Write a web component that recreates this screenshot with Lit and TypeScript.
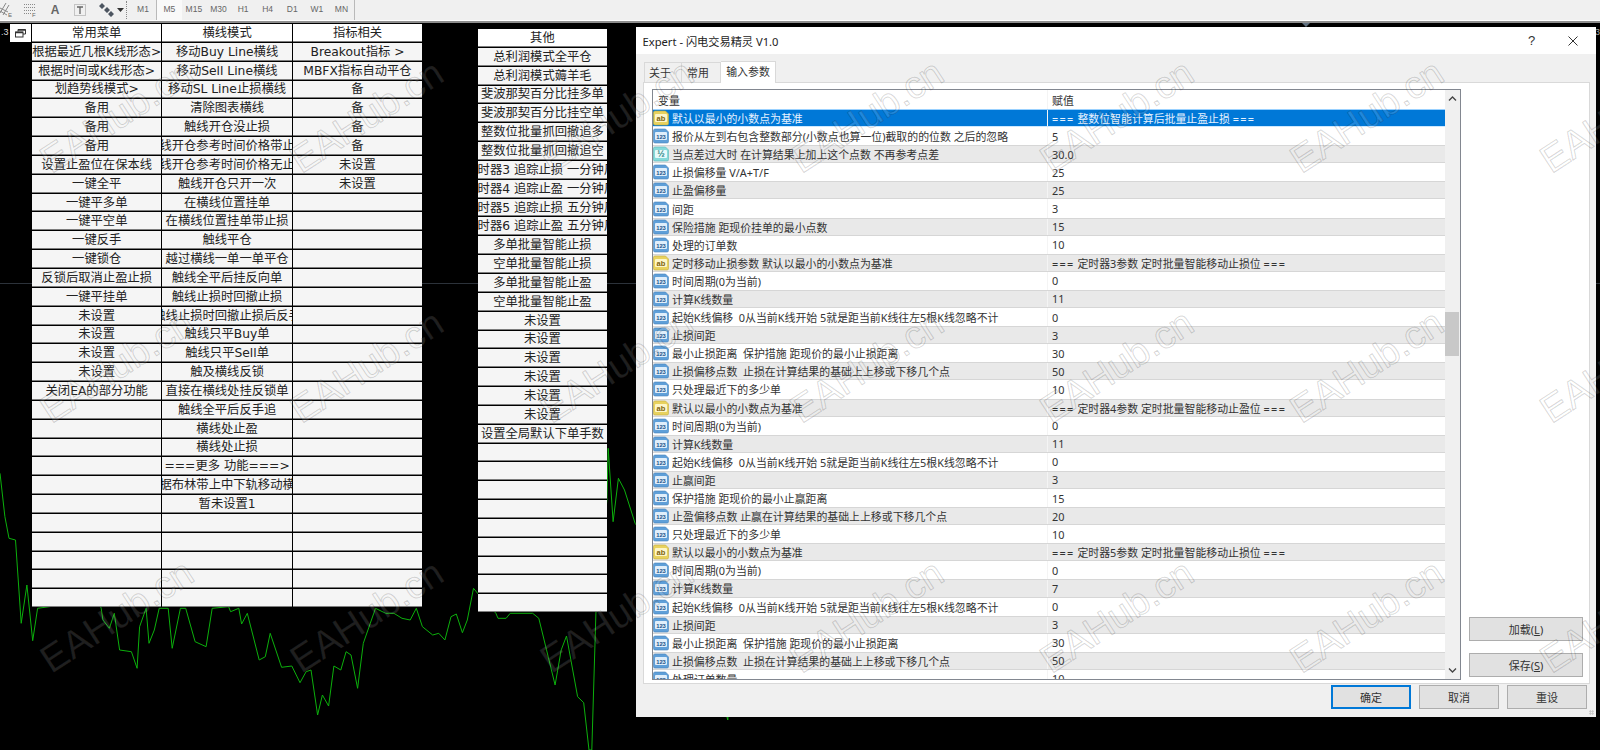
import { LitElement, html, css, svg } from "lit";
import { customElement } from "lit/decorators.js";

const pad = (a: string[], n = 31) => [...a, ...Array(Math.max(0, n - a.length)).fill("")];

const COL1 = pad(["常用菜单","根据最近几根K线形态>","根据时间或K线形态>","划趋势线模式>","备用","备用","备用","设置止盈位在保本线","一键全平","一键平多单","一键平空单","一键反手","一键锁仓","反锁后取消止盈止损","一键平挂单","未设置","未设置","未设置","未设置","关闭EA的部分功能"]);
const COL2 = pad(["横线模式","移动Buy Line横线","移动Sell Line横线","移动SL Line止损横线","清除图表横线","触线开仓没止损","触线开仓参考时间价格带止损","触线开仓参考时间价格无止损","触线开仓只开一次","在横线位置挂单","在横线位置挂单带止损","触线平仓","越过横线一单一单平仓","触线全平后挂反向单","触线止损时回撤止损","触线止损时回撤止损后反手","触线只平Buy单","触线只平Sell单","触及横线反锁","直接在横线处挂反锁单","触线全平后反手追","横线处止盈","横线处止损","===更多 功能===>","根据布林带上中下轨移动横线","暂未设置1"]);
const COL3 = pad(["指标相关","Breakout指标 >","MBFX指标自动平仓","备","备","备","备","未设置","未设置"]);
const COL4 = pad(["其他","总利润模式全平仓","总利润模式薅羊毛","斐波那契百分比挂多单","斐波那契百分比挂空单","整数位批量抓回撤追多","整数位批量抓回撤追空","定时器3 追踪止损 一分钟周期","定时器4 追踪止盈 一分钟周期","定时器5 追踪止损 五分钟周期","定时器6 追踪止盈 五分钟周期","多单批量智能止损","空单批量智能止损","多单批量智能止盈","空单批量智能止盈","未设置","未设置","未设置","未设置","未设置","未设置","设置全局默认下单手数"]);

type P = [string, string, string];
const offs = "起始K线偏移  0从当前K线开始 5就是距当前K线往左5根K线忽略不计";
const PARAMS: P[] = [
  ["ab","默认以最小的小数点为基准","=== 整数位智能计算后批量止盈止损 ==="],
  ["n","报价从左到右包含整数部分(小数点也算一位)截取的的位数 之后的忽略","5"],
  ["f","当点差过大时 在计算结果上加上这个点数 不再参考点差","30.0"],
  ["n","止损偏移量 V/A+T/F","25"],
  ["n","止盈偏移量","25"],
  ["n","间距","3"],
  ["n","保险措施 距现价挂单的最小点数","15"],
  ["n","处理的订单数","10"],
  ["ab","定时移动止损参数 默认以最小的小数点为基准","=== 定时器3参数 定时批量智能移动止损位 ==="],
  ["n","时间周期(0为当前)","0"],
  ["n","计算K线数量","11"],
  ["n",offs,"0"],
  ["n","止损间距","3"],
  ["n","最小止损距离  保护措施 距现价的最小止损距离","30"],
  ["n","止损偏移点数  止损在计算结果的基础上上移或下移几个点","50"],
  ["n","只处理最近下的多少单","10"],
  ["ab","默认以最小的小数点为基准","=== 定时器4参数 定时批量智能移动止盈位 ==="],
  ["n","时间周期(0为当前)","0"],
  ["n","计算K线数量","11"],
  ["n",offs,"0"],
  ["n","止赢间距","3"],
  ["n","保护措施 距现价的最小止赢距离","15"],
  ["n","止盈偏移点数 止赢在计算结果的基础上上移或下移几个点","20"],
  ["n","只处理最近下的多少单","10"],
  ["ab","默认以最小的小数点为基准","=== 定时器5参数 定时批量智能移动止损位 ==="],
  ["n","时间周期(0为当前)","0"],
  ["n","计算K线数量","7"],
  ["n",offs,"0"],
  ["n","止损间距","3"],
  ["n","最小止损距离  保护措施 距现价的最小止损距离","30"],
  ["n","止损偏移点数  止损在计算结果的基础上上移或下移几个点","50"],
  ["n","处理订单数量","10"],
];

// traced in zoomed coordinates: x / 2.45, 400 + y / 3
const TRACE = [0,220,12,350,22,415,38,420,52,670,66,555,80,722,92,625,240,600,248,625,252,660,268,685,280,640,293,750,322,755,336,805,342,680,358,625,365,730,378,690,390,625,412,625,422,745,442,625,455,625,478,725,505,740,520,625,560,620,565,635,585,625,592,672,606,640,635,780,650,770,662,700,690,802,715,798,735,848,750,815,762,810,778,945,790,885,805,918,818,798,835,810,848,755,860,765,876,865,890,730,920,625,945,640,965,640,985,655,1005,660,1020,625,1035,680,1060,705,1075,700,1090,720,1105,650,1118,642,1133,698,1145,660,1160,565,1170,580,1215,640,1220,655,1240,655,1250,640,1305,640,1320,655,1360,855,1375,750,1388,708,1415,890,1430,908,1443,1050,1450,1050,1460,640,1487,300,1490,145,1502,365,1515,235,1530,270,1556,370,1700,600,1783,960,1800,600];
const CHART_TOP = 23;
const LINE = TRACE.reduce((acc: string[], v, i) => {
  if (i % 2 === 0) acc.push(`${(v / 2.45).toFixed(1)},${(400 + TRACE[i + 1] / 3 - CHART_TOP).toFixed(1)}`);
  return acc;
}, []).join(" ");

const TFS = ["M5","M15","M30","H1","H4","D1","W1","MN"];

const marks: [number, number][] = [];
for (const y of [172, 422, 672]) for (let x = 50; x <= 1550; x += 250) marks.push([x, y]);

const icon = (k: string) => {
  const c = k === "ab"
    ? { f: "#e8d25e", s: "#c4ac3c", i: "#fdf6c8", t: "#7c620c", l: "ab", z: 7.500 }
    : k === "f"
    ? { f: "#86dada", s: "#58b8b8", i: "#e6fafa", t: "#268484", l: "½", z: 9 }
    : { f: "#5f9fd8", s: "#4684be", i: "#e0eefa", t: "#174f88", l: "123", z: 5.800 };
  return html`<svg class="ico" width="16" height="16" viewBox="0 0 16 16">
    <path d="M.5 2.500Q.5 1 2 1H12.500L15.500 4V13.500Q15.500 15 14 15H2Q.5 15 .5 13.500Z" fill=${c.f} stroke=${c.s} stroke-width=".6"/>
    <rect x="2" y="4" width="12" height="8" rx="1" fill=${c.i}/>
    <text x="8" y="10.500" text-anchor="middle" font-size=${c.z} font-weight="700" font-family="Liberation Sans, sans-serif" fill=${c.t}>${c.l}</text>
  </svg>`;
};

const valueText = (t: string) =>
  t.split(/(===)/).map((s) => (s === "===" ? html`<span class="eq">${s}</span>` : s));

@customElement("app-panel-table")
class PanelTable extends LitElement {
  static properties = { cols: { type: Array } };
  cols: string[][] = [];
  static styles = css`
    :host { display: block; }
    .grid { display: grid; grid-auto-flow: column; grid-template-rows: repeat(31, 17.85px); grid-auto-columns: 129.4px; gap: 1px; background: #000; }
    .cell { box-sizing: border-box; display: flex; align-items: center; justify-content: center; overflow: hidden; white-space: nowrap; padding-top: 2px; background: #f5f5f5; border-bottom: 1px solid #7d7d7d; color: #222; font: 12.3px/15px "DejaVu Sans", "Noto Sans CJK SC", sans-serif; }
    .head { background: #fff; }
    .offset { padding-left: 9px; }
  `;
  render() {
    return html`<div class="grid">${this.cols.map((c) => c.map((t, i) => html`<div class="cell ${i === 0 ? "head" : ""} ${t.startsWith("定时器") ? "offset" : ""}">${t}</div>`))}</div>`;
  }
}

@customElement("app-root")
class AppRoot extends LitElement {
  static styles = css`
    :host { display: block; position: relative; width: 1600px; height: 750px; overflow: hidden; background: #000; font-family: "Noto Sans", "Noto Sans CJK SC", sans-serif; }
    .page { display: flex; flex-direction: column; height: 100%; }

    .toolbar { flex: none; box-sizing: border-box; height: 23px; padding-bottom: 2px; display: flex; align-items: center; background: #f0f0f0; border-bottom: 2px solid #8e8e8e; box-shadow: inset 0 -1px 0 #fff; }
    .tool { flex: none; display: flex; align-items: center; justify-content: center; color: #666; }
    .tool svg { display: block; }
    .a { font: 700 12px "Liberation Sans", sans-serif; }
    .grip { flex: none; width: 2px; height: 18px; margin: 0 0 0 2px; border-left: 1px dotted #888; }
    .sep { flex: none; width: 1px; height: 21px; background: #b9b9b9; }
    .tf { flex: none; width: 24.600px; text-align: center; font: 8.500px "Liberation Sans", sans-serif; color: #666; height: 21px; line-height: 21px; }
    .tf.on { background: #f9f9f9; }
    .tf.first { margin-left: 1px; width: 26px; }

    .stage { position: relative; flex: 1; background: #000; }
    .chart { position: absolute; inset: 0; width: 100%; height: 100%; }
    .corner { position: absolute; left: 1px; top: 4px; color: #ddd; font: 9px "Liberation Sans", sans-serif; }
    .corner2 { position: absolute; right: 0; top: 4px; color: #aaa; font: 9px "Liberation Sans", sans-serif; }
    .restore { position: absolute; left: 10px; top: 1px; width: 21px; height: 18px; background: #fff; display: flex; align-items: center; justify-content: center; }
    .t1 { position: absolute; left: 32px; top: 1px; }
    .t2 { position: absolute; left: 477.700px; top: 6px; }
    .shift { position: absolute; left: 1302px; top: 0; width: 0; height: 0; border: 4px solid transparent; border-top-color: #5f6f7f; }

    .dialog { position: absolute; left: 636px; top: 4px; width: 960px; height: 690px; display: flex; flex-direction: column; background: #f0f0f0; color: #333; font-size: 10.900px; }
    .title { flex: none; height: 27px; padding: 0 18px 0 6.500px; display: flex; align-items: center; background: #fff; font-size: 11.200px; color: #222; }
    .title .name { flex: 1; }
    .q { width: 40px; font: 13px "Liberation Sans", sans-serif; text-align: left; color: #333; }
    .tabs { flex: none; height: 28px; box-sizing: border-box; padding: 7px 0 0 8px; display: flex; align-items: flex-end; }
    .tab { box-sizing: border-box; height: 20px; display: flex; align-items: center; justify-content: center; padding: 0 6px 2px 0; border: 1px solid #d9d9d9; border-bottom: 0; border-left: 0; background: #f0f0f0; }
    .tab.first { width: 38px; border-left: 1px solid #d9d9d9; }
    .tab.second { width: 39px; }
    .tab.active { width: 55px; height: 22px; background: #fff; padding: 0 0 4px; position: relative; top: 1px; }
    .panel { flex: none; box-sizing: border-box; height: 602px; margin: 0 6px 0 7px; padding: 6px 7px 5px 8px; display: flex; gap: 8px; background: #fff; border: 1px solid #d9d9d9; }
    .list { flex: none; box-sizing: border-box; width: 809px; height: 591px; display: flex; border: 1px solid #828790; overflow: hidden; }
    .table { flex: 1; min-width: 0; overflow: hidden; }
    .row { box-sizing: border-box; height: 18.100px; display: grid; grid-template-columns: 394px 1fr; align-items: center; white-space: pre; }
    .row.hd { height: 19px; color: #333; }
    .row.hd .name { padding-left: 5px; }
    .row.alt { background: #e9e9e9; border-top: 1px solid #d6d6d6; border-bottom: 1px solid #d6d6d6; }
    .row.sel { background: #0078d7; border-top: 1px solid #99d1ff; border-bottom: 1px solid #cce8ff; color: #e6f2ff; }
    .name { display: flex; align-items: center; gap: 3px; overflow: hidden; }
    .ico { flex: none; }
    .val { align-self: stretch; display: flex; align-items: center; padding-left: 4px; border-left: 1px solid #f4f4f4; }
    .eq { letter-spacing: 1.300px; }
    .scroll { flex: none; width: 15px; display: flex; flex-direction: column; background: #f0f0f0; }
    .chev { flex: none; height: 17px; display: flex; align-items: center; justify-content: center; }
    .track { flex: 1; position: relative; }
    .thumb { position: absolute; left: 0; right: 1px; top: 205px; height: 44px; background: #c8c8c8; }
    .side { flex: 1; display: flex; flex-direction: column; justify-content: flex-end; gap: 12px; padding-bottom: 1px; }
    .btn { flex: none; box-sizing: border-box; height: 24px; display: flex; align-items: center; justify-content: center; background: #e1e1e1; border: 1px solid #adadad; color: #333; font-size: 11px; }
    .side .btn { width: 114px; }
    .btn u { text-underline-offset: 1px; }
    .foot { flex: 1; padding: 1px 9px 0 0; display: flex; justify-content: flex-end; gap: 8px; align-items: flex-start; position: relative; }
    .foot .btn { width: 80px; }
    .foot .btn.def { border: 2px solid #0078d7; margin-right: 0; }
    .rs { position: absolute; right: 2px; bottom: 2px; width: 5px; height: 5px; background-image: radial-gradient(#c4c4c4 50%, transparent 55%); background-size: 2.500px 2.500px; }

    .marks { position: absolute; inset: 0; pointer-events: none; overflow: hidden; }
    .mark { position: absolute; font: 38.500px/40px "Liberation Sans", sans-serif; white-space: nowrap; transform-origin: 0 100%; transform: rotate(-33deg); color: rgba(255,255,255,.13); -webkit-text-stroke: 1px rgba(0,0,0,.17); }
  `;

  private toolbar() {
    return html`<div class="toolbar">
      <span class="tool" style="width:14px"><svg width="14" height="16" viewBox="0 0 14 16" fill="none" stroke="#888"><path d="M0 11 6 1M3 13 9 3M0 6 8 10M0 9l7 4"/><text x="8" y="15" font-size="6" fill="#666" stroke="none" font-family="Liberation Sans">E</text></svg></span>
      <span class="tool" style="width:14px;margin-left:10px"><svg width="14" height="16" viewBox="0 0 14 16" fill="none" stroke="#8a8a8a" stroke-dasharray="1 1"><path d="M0 2.500H12M0 5.500H12M0 8.500H12M0 11.500H7"/><text x="8" y="15" font-size="6" fill="#666" stroke="none" stroke-dasharray="0" font-family="Liberation Sans">F</text></svg></span>
      <span class="tool a" style="width:12px;margin-left:11px">A</span>
      <span class="tool" style="width:12px;margin-left:13px"><svg width="12" height="14" viewBox="0 0 12 14" fill="none"><rect x=".5" y="1.500" width="11" height="11" stroke="#999" stroke-dasharray="1 1"/><path d="M3 4H9M6 4V11" stroke="#666" stroke-width="1.300"/></svg></span>
      <span class="tool" style="width:15px;margin-left:13px"><svg width="15" height="14" viewBox="0 0 15 14" fill="#4c5560"><path d="M3 0 6 3 3 6 0 3ZM8 4l3 3-3 3-3-3ZM12 8l3 3-3 3-3-3Z"/></svg></span>
      <span class="tool" style="width:7px;margin-left:3px"><svg width="7" height="4" viewBox="0 0 7 4" fill="#333"><path d="M0 0H7L3.500 4Z"/></svg></span>
      <span class="grip"></span>
      <span class="tf first">M1</span>
      <span class="sep"></span>
      ${TFS.map((t, i) => html`<span class="tf ${i === 0 ? "on" : ""}">${t}</span>`)}
      <span class="sep"></span>
    </div>`;
  }

  private dialog() {
    return html`<section class="dialog">
      <header class="title">
        <span class="name">Expert - 闪电交易精灵 V1.0</span>
        <span class="q">?</span>
        <svg width="10" height="10" viewBox="0 0 10 10" stroke="#333" fill="none"><path d="M.5.5 9.500 9.500M9.500.5.5 9.500"/></svg>
      </header>
      <nav class="tabs">
        <span class="tab first">关于</span><span class="tab second">常用</span><span class="tab active">输入参数</span>
      </nav>
      <div class="panel">
        <div class="list">
          <div class="table">
            <div class="row hd"><span class="name">变量</span><span class="val">赋值</span></div>
            ${PARAMS.map((p, i) => html`<div class="row ${i === 0 ? "sel" : i % 2 === 0 ? "alt" : ""}">
              <span class="name">${icon(p[0])}<span>${p[1]}</span></span>
              <span class="val"><span>${valueText(p[2])}</span></span>
            </div>`)}
          </div>
          <div class="scroll">
            <span class="chev"><svg width="9" height="5" viewBox="0 0 9 5" fill="none" stroke="#444" stroke-width="1.300"><path d="M1 4.500 4.500 1 8 4.500"/></svg></span>
            <div class="track"><div class="thumb"></div></div>
            <span class="chev"><svg width="9" height="5" viewBox="0 0 9 5" fill="none" stroke="#444" stroke-width="1.300"><path d="M1 .5 4.500 4 8 .5"/></svg></span>
          </div>
        </div>
        <div class="side">
          <div class="btn">加载(<u>L</u>)</div>
          <div class="btn">保存(<u>S</u>)</div>
        </div>
      </div>
      <footer class="foot">
        <div class="btn def">确定</div>
        <div class="btn">取消</div>
        <div class="btn">重设</div>
        <span class="rs"></span>
      </footer>
    </section>`;
  }

  render() {
    return html`<div class="page">
        ${this.toolbar()}
        <main class="stage">
          <svg class="chart" viewBox="0 0 1600 727" preserveAspectRatio="none">
            <line x1="0" y1="260.500" x2="1600" y2="260.500" stroke="#2c323a"/>
            ${svg`<polyline points=${LINE} fill="none" stroke="#0cb00c" stroke-width="1"/>`}
          </svg>
          <span class="corner">.3</span>
          <span class="corner2">3</span>
          <span class="shift"></span>
          <span class="restore"><svg width="11" height="9" viewBox="0 0 11 9" fill="none" stroke="#333"><path d="M3 2.500V.5H10.500V5H8"/><rect x=".5" y="3" width="7.500" height="5" /><path d="M.5 3.500H8M3 1H10.500" stroke-width="1.500"/></svg></span>
          <app-panel-table class="t1" .cols=${[COL1, COL2, COL3]}></app-panel-table>
          <app-panel-table class="t2" .cols=${[COL4]}></app-panel-table>
          ${this.dialog()}
        </main>
      </div>
      <div class="marks">${marks.map(([x, y]) => html`<span class="mark" style="left:${x + 5}px;top:${y - 32}px">EAHub.cn</span>`)}</div>`;
  }
}
